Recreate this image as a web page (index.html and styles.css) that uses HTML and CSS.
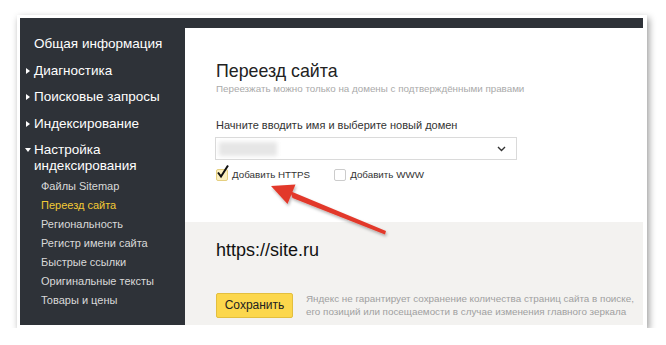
FILE: index.html
```html
<!DOCTYPE html>
<html>
    <head>
        <meta charset="UTF-8" />
        <link rel="stylesheet" href="styles.css">
    </head>
    <body>
        <div class="frame">
            <div class="window">
                <div class="sidebar">
                    <div class="nav-item"><span class="marker"></span>Общая информация</div>
                    <div class="nav-item closed"><span class="marker"></span>Диагностика</div>
                    <div class="nav-item closed"><span class="marker"></span>Поисковые запросы</div>
                    <div class="nav-item closed"><span class="marker"></span>Индексирование</div>
                    <div class="nav-item open"><span class="marker"></span>Настройка<br>индексирования</div>
                    <ul class="sub">
                        <li>Файлы Sitemap</li>
                        <li class="active">Переезд сайта</li>
                        <li>Региональность</li>
                        <li>Регистр имени сайта</li>
                        <li>Быстрые ссылки</li>
                        <li>Оригинальные тексты</li>
                        <li>Товары и цены</li>
                    </ul>
                </div>

                <div class="main">
                    <div class="form">
                        <h1>Переезд сайта</h1>
                        <p class="hint">Переезжать можно только на домены с подтверждёнными правами</p>
                        <p class="label">Начните вводить имя и выберите новый домен</p>
                        <div class="select">
                            <span class="blur"></span>
                            <svg class="chevron" width="9" height="6" viewBox="0 0 9 6">
                                <path d="M1 1 L4.5 4.5 L8 1" fill="none" stroke="#333" stroke-width="1.4"/>
                            </svg>
                        </div>
                        <div class="checks">
                            <label class="check on">
                                <span class="box">
                                    <svg width="14" height="15" viewBox="0 0 14 15">
                                        <path d="M2 8.5 L5 12.5 L12 1.5" fill="none" stroke="#111" stroke-width="2"/>
                                    </svg>
                                </span>
                                Добавить HTTPS
                            </label>
                            <label class="check"><span class="box"></span>Добавить WWW</label>
                        </div>
                    </div>

                    <div class="result">
                        <div class="site">https://site.ru</div>
                        <div class="actions">
                            <button class="btn">Сохранить</button>
                            <p class="note">Яндекс не гарантирует сохранение количества страниц сайта в поиске,<br>его позиций или посещаемости в случае изменения главного зеркала</p>
                        </div>
                    </div>
                </div>
            </div>
        </div>

        <svg class="arrow" width="666" height="345" viewBox="0 0 666 345">
            <defs>
                <filter id="sh" x="-20%" y="-20%" width="140%" height="140%">
                    <feDropShadow dx="1" dy="2" stdDeviation="1.5" flood-color="#000" flood-opacity="0.3"/>
                </filter>
            </defs>
            <g filter="url(#sh)" fill="#e2392a">
                <polygon points="290,191 292.5,198 385,234.5 386,231"/>
                <polygon points="271,186 295.5,184.5 287.5,204"/>
            </g>
        </svg>
    </body>
</html>
```

FILE: styles.css
```css
body {
    margin: 0;
    background-color: white;
    font-family: "Liberation Sans", Arial, sans-serif;
}

.frame {
    margin-left: 17px;
    margin-top: 15px;
    width: 630px;
    height: 313px;
    box-sizing: border-box;
    padding: 3px 4px 3px 3px;
    background-color: white;
    box-shadow: 2px 3px 7px rgba(0, 0, 0, 0.4);
}

.window {
    display: flex;
    height: 100%;
    padding-top: 10px;
    box-sizing: border-box;
    background-color: #2e3238;
}

/* sidebar */
.sidebar {
    width: 165px;
    flex: none;
    padding: 8px 0 0 5px;
    box-sizing: border-box;
}

.nav-item {
    display: flex;
    color: white;
    font-size: 13.5px;
    line-height: 16px;
    margin-bottom: 10.5px;
}

.marker {
    width: 9px;
    flex: none;
}

.closed .marker::before {
    content: "";
    display: block;
    margin-top: 5px;
    margin-left: 1px;
    border-left: 4px solid white;
    border-top: 3px solid transparent;
    border-bottom: 3px solid transparent;
    width: 0;
}

.open {
    margin-bottom: 2.5px;
}

.open .marker::before {
    content: "";
    display: block;
    margin-top: 6px;
    border-top: 4px solid white;
    border-left: 3px solid transparent;
    border-right: 3px solid transparent;
    width: 0;
}

.sub {
    margin: 0;
    padding-left: 16px;
    list-style: none;
    font-size: 11px;
    line-height: 19px;
    color: #d9d9d9;
}

.sub .active {
    color: #f2c935;
}

/* main */
.main {
    flex: 1;
    display: flex;
    flex-direction: column;
    background-color: white;
}

.form {
    height: 194px;
    box-sizing: border-box;
    padding: 32px 0 0 31px;
}

h1 {
    margin: 0;
    font-size: 17.8px;
    font-weight: normal;
    line-height: 22px;
    color: #222;
}

.hint {
    margin: 0;
    font-size: 9.8px;
    line-height: 14px;
    color: #aaa;
}

.label {
    margin: 22px 0 0 0;
    font-size: 11px;
    line-height: 14px;
    color: #333;
}

.select {
    margin-top: 5px;
    margin-left: -1px;
    width: 302px;
    height: 23px;
    box-sizing: border-box;
    border: 1px solid #dadada;
    display: flex;
    align-items: center;
    justify-content: space-between;
    padding: 0 10px 0 3px;
}

.blur {
    width: 58px;
    height: 14px;
    background-color: #e6e6e6;
    filter: blur(2px);
}

.checks {
    display: flex;
    gap: 24px;
    margin-top: 8px;
    font-size: 9.8px;
    line-height: 14px;
    color: #333;
}

.check {
    display: flex;
    align-items: center;
    gap: 4px;
}

.box {
    width: 10px;
    height: 10px;
    border: 1px solid #ccc;
    border-radius: 2px;
    background-color: white;
    position: relative;
}

.on .box {
    background-color: #fbefbf;
    border-color: #e5cf80;
}

.on .box svg {
    position: absolute;
    left: -1px;
    top: -6px;
}

.result {
    flex: 1;
    background-color: #f3f2f0;
    padding: 18px 0 0 31px;
}

.site {
    font-size: 18px;
    line-height: 20px;
    color: #111;
}

.actions {
    display: flex;
    align-items: center;
    gap: 13px;
    margin-top: 32px;
}

.btn {
    width: 77px;
    height: 25px;
    flex: none;
    background-color: #fcd74c;
    border: 1px solid #e3bf3e;
    border-radius: 2px;
    font-family: "Liberation Sans", Arial, sans-serif;
    font-size: 12px;
    color: #222;
    padding: 0;
}

.note {
    margin: 0;
    font-size: 9.85px;
    line-height: 13px;
    color: #a0a0a0;
}

.arrow {
    position: absolute;
    left: 0;
    top: 0;
    pointer-events: none;
}
```
